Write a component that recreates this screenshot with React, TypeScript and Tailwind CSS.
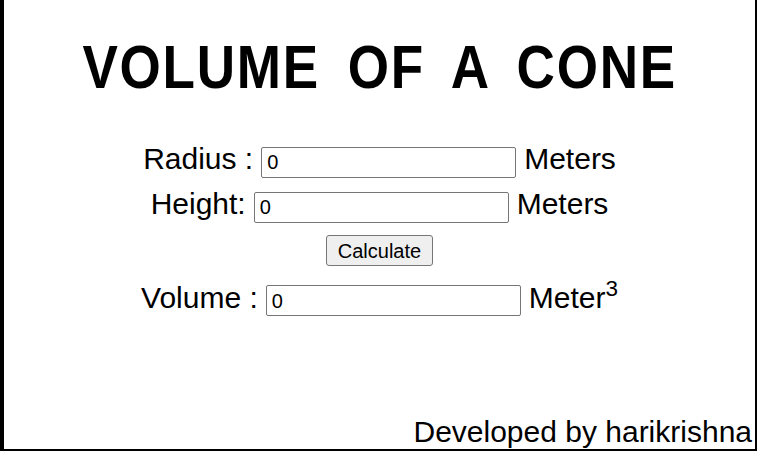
import React from "react";

export default function App() {
  const font = { fontFamily: '"Liberation Sans", Arial, sans-serif' };
  const inputCls =
    "w-[255px] h-[31px] border border-[#767676] rounded-[2px] pl-[5px] pr-[2px] text-[20px] text-black bg-white outline-none";
  return (
    <div
      className="h-[451px] w-[757px] bg-white border-l-4 border-r-2 border-b-2 border-black flex flex-col text-black overflow-hidden"
      style={font}
    >
      <div className="pt-[32px] flex justify-center">
        <h1 className="inline-block text-[61px] leading-[70px] font-bold scale-x-[0.87] tracking-[2px] [word-spacing:13px] whitespace-nowrap">
          VOLUME OF A CONE
        </h1>
      </div>

      <div className="mt-[40px] flex items-baseline justify-center gap-[8px] text-[30px] leading-[34.5px]">
        <span>Radius :</span>
        <input className={inputCls} defaultValue="0" style={font} />
        <span>Meters</span>
      </div>

      <div className="mt-[9px] flex items-baseline justify-center gap-[8px] text-[30px] leading-[34.5px]">
        <span>Height:</span>
        <input className={inputCls} defaultValue="0" style={font} />
        <span>Meters</span>
      </div>

      <div className="mt-[12px] flex justify-center">
        <button
          className="w-[107px] h-[31px] border border-[#767676] rounded-[3px] bg-[#efefef] text-[20px] text-black"
          style={font}
        >
          Calculate
        </button>
      </div>

      <div className="mt-[15px] flex items-baseline justify-center gap-[8px] text-[30px] leading-[34.5px]">
        <span>Volume :</span>
        <input className={inputCls} defaultValue="0" style={font} />
        <span>
          Meter<sup>3</sup>
        </span>
      </div>

      <div className="mt-auto flex justify-end pr-[3px] text-[30px] leading-[34.5px]">
        Developed by harikrishna
      </div>
    </div>
  );
}
